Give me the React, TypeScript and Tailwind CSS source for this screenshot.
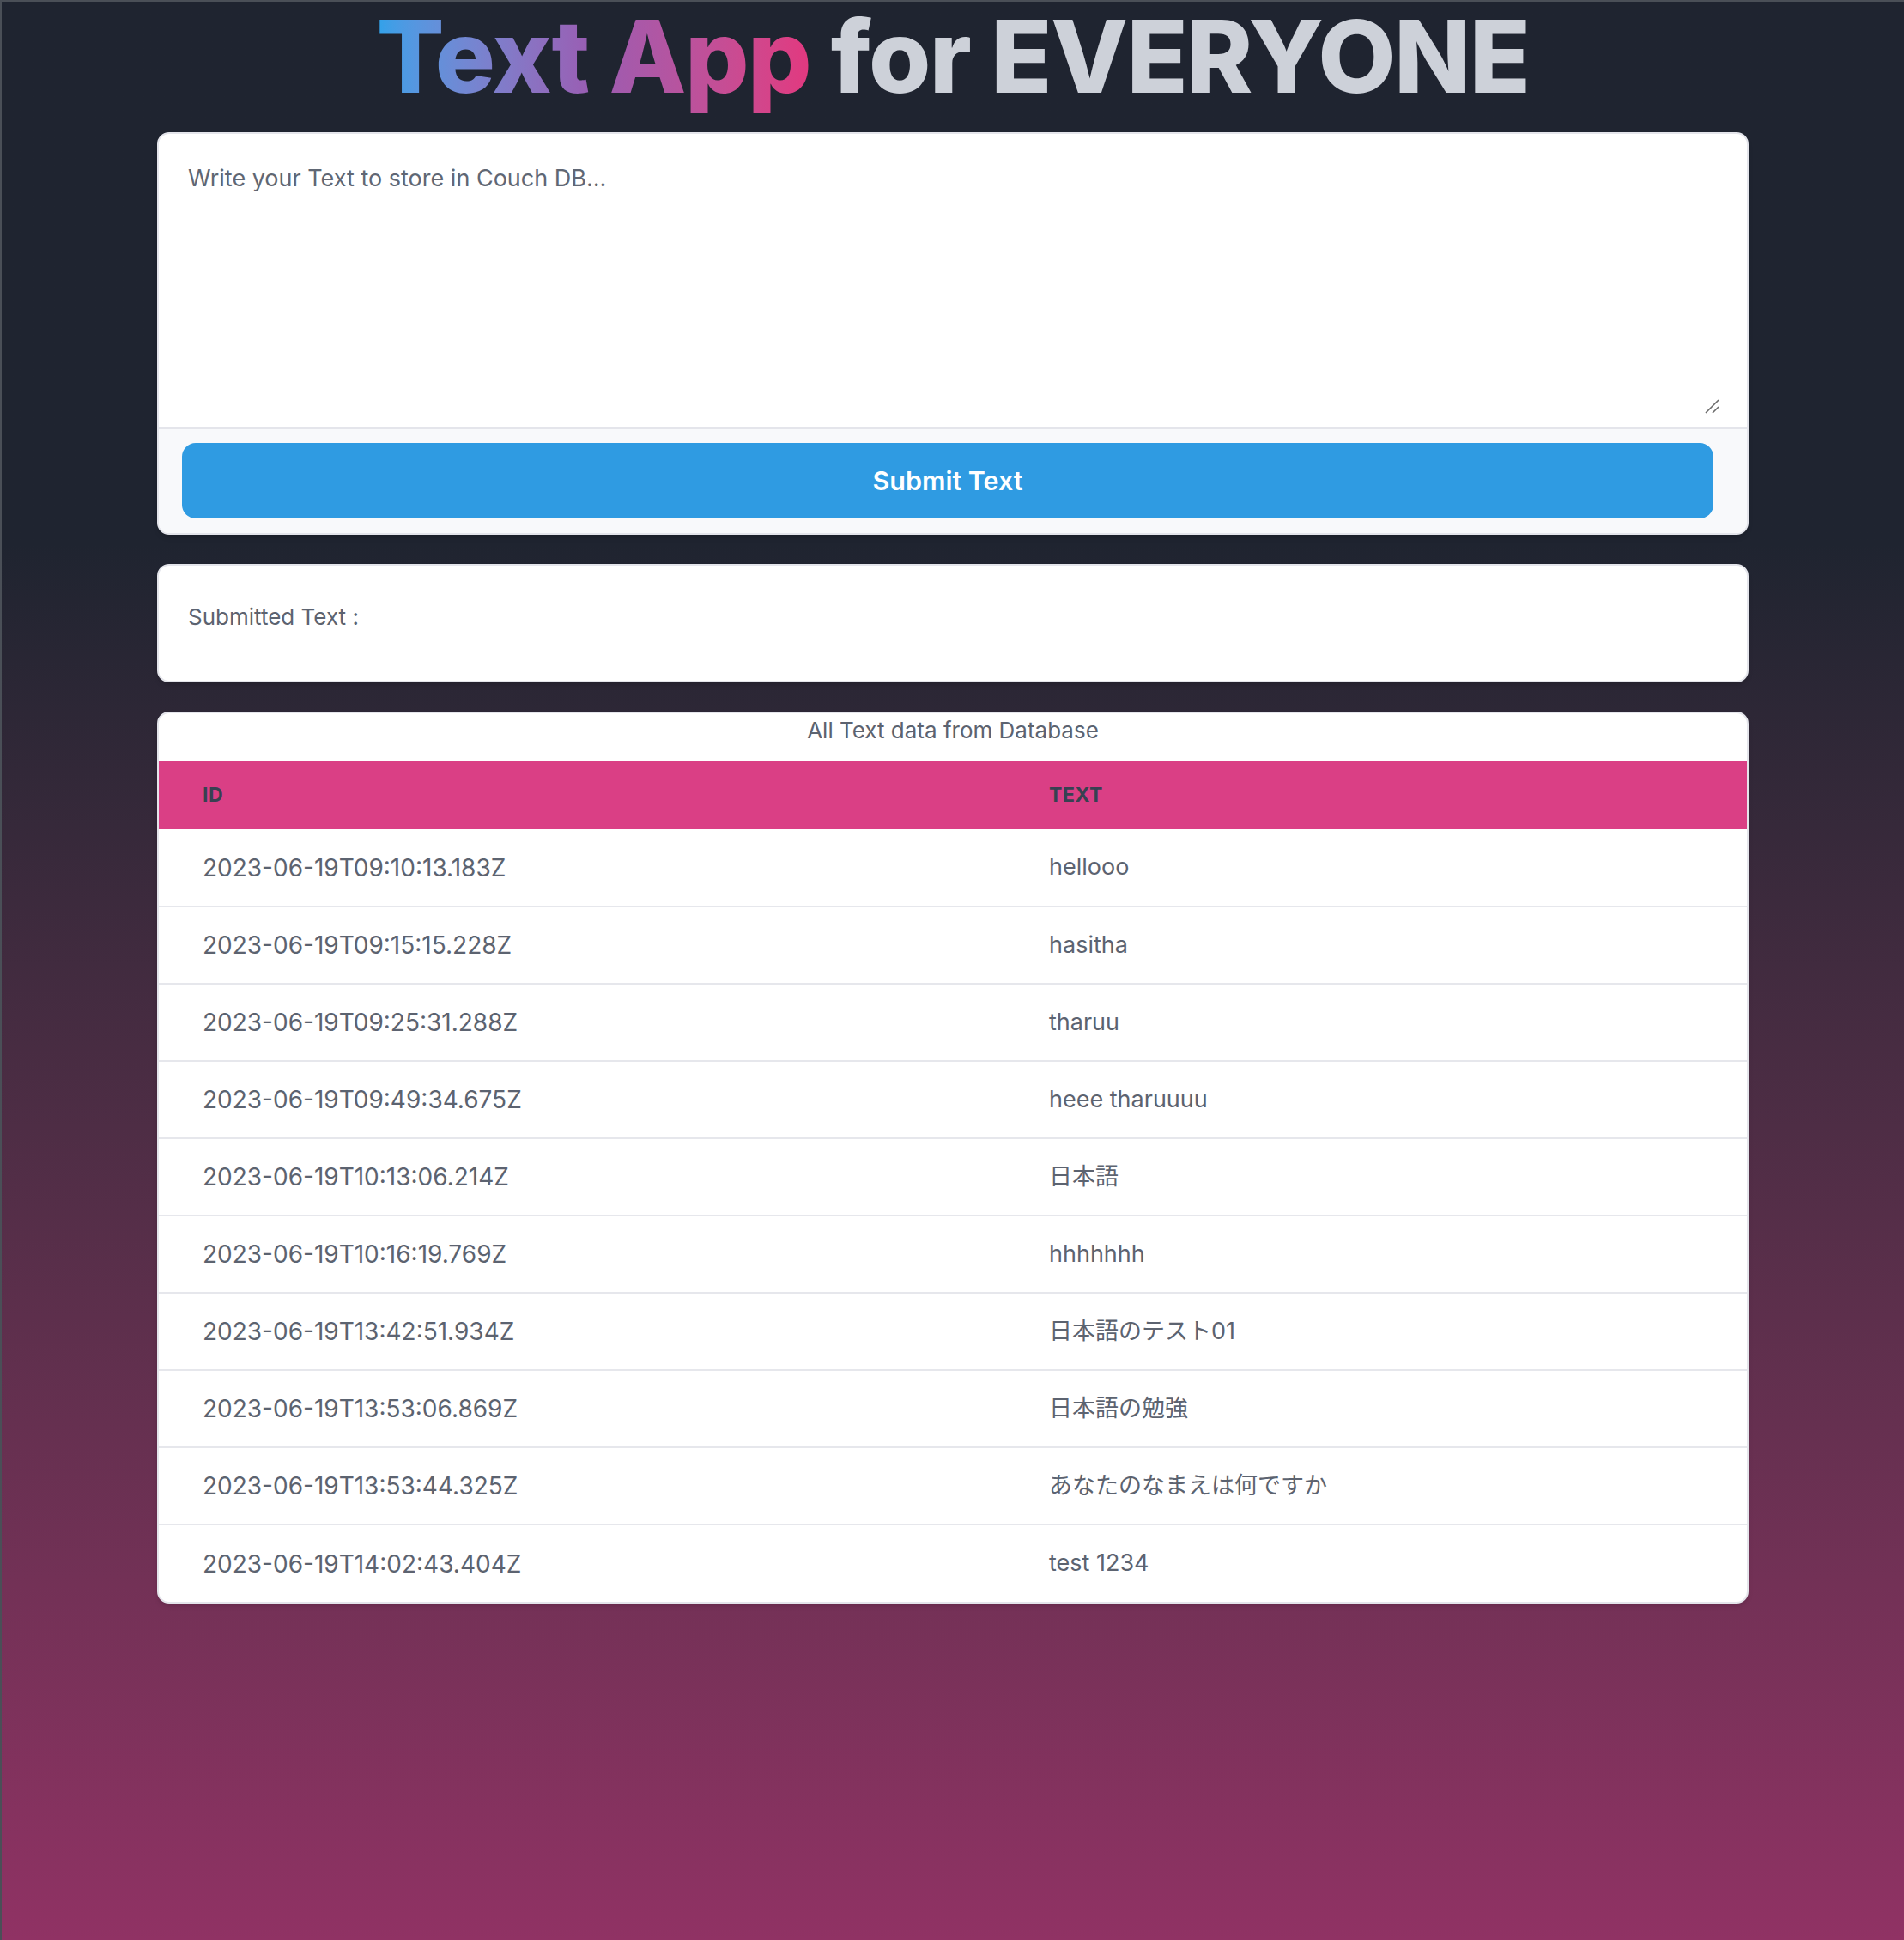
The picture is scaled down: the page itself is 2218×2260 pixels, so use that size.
import { useState } from "react";

interface Row {
  id: string;
  text: string;
}

const ROWS: Row[] = [
  { id: "2023-06-19T09:10:13.183Z", text: "hellooo" },
  { id: "2023-06-19T09:15:15.228Z", text: "hasitha" },
  { id: "2023-06-19T09:25:31.288Z", text: "tharuu" },
  { id: "2023-06-19T09:49:34.675Z", text: "heee tharuuuu" },
  { id: "2023-06-19T10:13:06.214Z", text: "日本語" },
  { id: "2023-06-19T10:16:19.769Z", text: "hhhhhhh" },
  { id: "2023-06-19T13:42:51.934Z", text: "日本語のテスト01" },
  { id: "2023-06-19T13:53:06.869Z", text: "日本語の勉強" },
  { id: "2023-06-19T13:53:44.325Z", text: "あなたのなまえは何ですか" },
  { id: "2023-06-19T14:02:43.404Z", text: "test 1234" },
];

export default function App() {
  const [text, setText] = useState("");

  return (
    <div className="min-h-[2260px] w-full border-t-2 border-l-2 border-[#4a4f57] bg-linear-to-b from-[#1f2430] from-[28%] to-[#903264] font-['Inter','Noto_Sans_CJK_JP',sans-serif]">
      {/* Title */}
      <h1 className="pb-[24px] text-center text-[117px] font-extrabold leading-[128px] tracking-[-0.014em]">
        <span className="bg-linear-to-r from-[#2ea2ea] via-[#9a5cb2] to-[#e2387f] bg-clip-text pb-[6px] text-transparent">
          Text App
        </span>{" "}
        <span className="text-[#cdd1d9]">for EVERYONE</span>
      </h1>

      <div className="mx-auto flex w-[1854px] flex-col gap-[34px]">
        {/* Input card */}
        <div className="overflow-hidden rounded-[14px] border-2 border-[#e4e5eb] bg-white shadow-md">
          <div className="relative pt-[18px] pr-[28px] pb-[14px] pl-[22px]">
            <textarea
              value={text}
              onChange={(e) => setText(e.target.value)}
              placeholder="Write your Text to store in Couch DB..."
              className="block h-[310px] w-full resize-none border-0 bg-transparent px-[12px] py-[12px] text-[27px] leading-[43px] text-[#374151] outline-none placeholder:text-[#606774]"
            />
            {/* resize grip */}
            <svg
              className="pointer-events-none absolute right-[32px] bottom-[16px]"
              width="17"
              height="17"
              viewBox="0 0 17 17"
            >
              <path d="M1 16 L16 1 M9 16 L16 9" stroke="#6b6b6b" strokeWidth="1.6" fill="none" />
            </svg>
          </div>
          <div className="h-[123px] border-t-2 border-[#e4e5eb] bg-[#f8f9fb] pt-[16px] pr-[39px] pl-[27px]">
            <button className="flex h-[88px] w-full items-center justify-center rounded-[16px] bg-[#2f9be2] text-[30.5px] font-semibold text-white">
              Submit Text
            </button>
          </div>
        </div>

        {/* Submitted text */}
        <div className="h-[138px] rounded-[14px] border-2 border-[#e4e5eb] bg-white pt-[38px] pl-[34px] shadow-md">
          <p className="text-[26px] leading-[43px] text-[#5c6370]">Submitted Text :</p>
        </div>

        {/* Table */}
        <div className="overflow-hidden rounded-[14px] border-2 border-[#e4e5eb] bg-white shadow-md">
          <div className="h-[55px] text-center text-[26px] leading-[40px] text-[#5c6370]">
            All Text data from Database
          </div>
          <table className="w-full border-collapse">
            <thead>
              <tr className="h-[80px] bg-[#da3f85]">
                <th className="w-[986px] pl-[51px] text-left text-[23px] font-bold tracking-wide text-[#374151] uppercase">
                  ID
                </th>
                <th className="pl-[51px] text-left text-[23px] font-bold tracking-wide text-[#374151] uppercase">
                  Text
                </th>
              </tr>
            </thead>
            <tbody>
              {ROWS.map((row, i) => (
                <tr
                  key={row.id}
                  className={i < ROWS.length - 1 ? "h-[90px] border-b-2 border-[#e6e7ec]" : "h-[90px]"}
                >
                  <td className="pl-[51px] text-[28px] text-[#5c6370]">{row.id}</td>
                  <td className="pl-[51px] text-[27px] text-[#5c6370]">{row.text}</td>
                </tr>
              ))}
            </tbody>
          </table>
        </div>
      </div>
    </div>
  );
}
